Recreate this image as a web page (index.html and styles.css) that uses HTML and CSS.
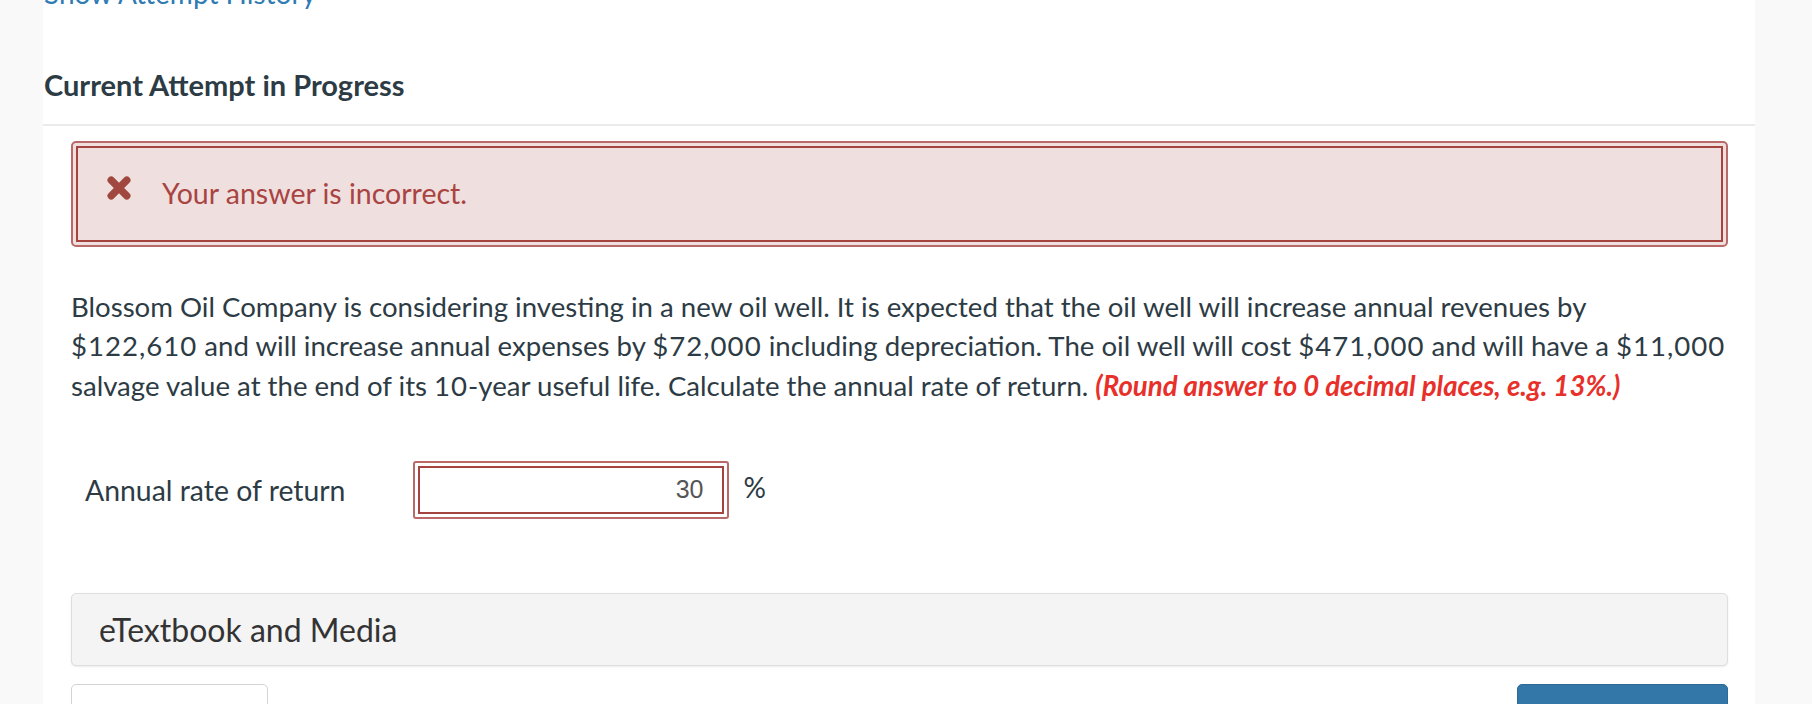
FILE: index.html
```html
<!DOCTYPE html>
<html lang="en">
<head>
<meta charset="utf-8">
<title>Current Attempt in Progress</title>
<link rel="stylesheet" href="styles.css">
</head>
<body>
<div class="page">
  <main class="main">
    <div class="history"><a class="history-link" href="#">Show Attempt History</a></div>
    <h2 class="attempt-title">Current Attempt in Progress</h2>
    <div class="content">
      <div class="alert-outer">
        <div class="alert">
          <svg class="alert-icon" viewBox="0 0 24 24" width="26" height="26" aria-hidden="true">
            <path d="M4.8 4.8 L19.2 19.2 M19.2 4.8 L4.8 19.2" stroke="#a0483f" stroke-width="6.8" stroke-linecap="round" fill="none"/>
          </svg>
          <span class="alert-text">Your answer is incorrect.</span>
        </div>
      </div>

      <p class="question">Blossom Oil Company is considering investing in a new oil well. It is expected that the oil well will increase annual revenues by<br><span class="amount">$122,610</span> and will increase annual expenses by <span class="amount">$72,000</span> including depreciation. The oil well will cost <span class="amount">$471,000</span> and will have a <span class="amount">$11,000</span><br>salvage value at the end of its <span class="amount">10</span>-year useful life. Calculate the annual rate of return. <em class="hint">(Round answer to 0 decimal places, e.g. 13%.)</em></p>

      <div class="answer-row">
        <label class="answer-label" for="rate">Annual rate of return</label>
        <div class="input-outer">
          <input class="answer-input" id="rate" type="text" value="30">
        </div>
        <span class="unit">%</span>
      </div>

      <div class="media-bar">eTextbook and Media</div>

      <div class="actions">
        <button class="btn btn-secondary" type="button"></button>
        <button class="btn btn-primary" type="button"></button>
      </div>
    </div>
  </main>
</div>
</body>
</html>
```

FILE: styles.css
```css
html, body {
  margin: 0;
  padding: 0;
}

body {
  background: #f9f9f9;
  font-family: Lato, "Open Sans", "Liberation Sans", sans-serif;
  color: #2d3b45;
  overflow: hidden;
}

.page {
  display: flex;
  height: 704px;
}

.main {
  margin-left: 43px;
  width: 1712px;
  background: #ffffff;
  height: 704px;
}

.history {
  margin-top: -19px;
  height: 24px;
  line-height: 24px;
  font-size: 28px;
  padding-left: 1px;
}

.history-link {
  color: #2f7bb4;
  text-decoration: none;
}

.attempt-title {
  margin: 65px 0 0 0;
  padding: 0 0 23.5px 1px;
  font-size: 29px;
  line-height: 30px;
  font-weight: 700;
  color: #2d3b45;
  border-bottom: 2px solid #ebebeb;
}

.content {
  padding: 15px 27px 0 28px;
}

.alert-outer {
  border: 2px solid #b96a68;
  border-radius: 5px;
  padding: 3px;
  background: #efdfdf;
}

.alert {
  border: 2px solid #a5433f;
  background: #efdfdf;
  height: 92px;
  display: flex;
  align-items: center;
  padding-left: 28px;
  gap: 30px;
}

.alert-icon {
  display: block;
  flex: none;
  margin-top: -12px;
}

.alert-text {
  font-size: 28.5px;
  color: #a94442;
  line-height: 1;
}

.question {
  margin: 40.5px 0 0 0;
  font-size: 27.6px;
  line-height: 39.3px;
  color: #2d3b45;
  white-space: nowrap;
}

.amount {
  letter-spacing: 1px;
}

.hint {
  color: #e8302a;
  font-weight: 700;
  font-style: italic;
}

.answer-row {
  display: flex;
  align-items: center;
  margin-top: 56px;
  padding-left: 14px;
}

.answer-label {
  width: 327.5px;
  font-size: 28.4px;
  color: #2d3b45;
  flex: none;
}

.input-outer {
  border: 2px solid #b96a68;
  border-radius: 3px;
  padding: 3px;
  width: 306px;
  flex: none;
}

.answer-input {
  display: block;
  box-sizing: border-box;
  width: 306px;
  height: 48px;
  margin: 0;
  border: 2px solid #a5433f;
  padding: 0 18px 0 8px;
  text-align: right;
  font-family: "Liberation Sans", Arial, sans-serif;
  font-size: 25px;
  color: #555555;
  background: #ffffff;
  outline: none;
}

.unit {
  margin-left: 15px;
  margin-top: -6px;
  font-size: 28px;
  color: #2d3b45;
}

.media-bar {
  margin-top: 74px;
  height: 71px;
  border: 1px solid #dedede;
  border-radius: 5px;
  background: #f4f4f4;
  box-shadow: 0 1px 2px rgba(0, 0, 0, 0.08);
  display: flex;
  align-items: center;
  padding-left: 27px;
  font-size: 32px;
  color: #333333;
}

.actions {
  display: flex;
  justify-content: space-between;
  margin-top: 18px;
}

.btn {
  height: 52px;
  border-radius: 5px;
  padding: 0;
  margin: 0;
}

.btn-secondary {
  width: 197px;
  background: #ffffff;
  border: 1px solid #d4d4d4;
}

.btn-primary {
  width: 211px;
  background: #3277a8;
  border: 1px solid #2c6a97;
}
```
